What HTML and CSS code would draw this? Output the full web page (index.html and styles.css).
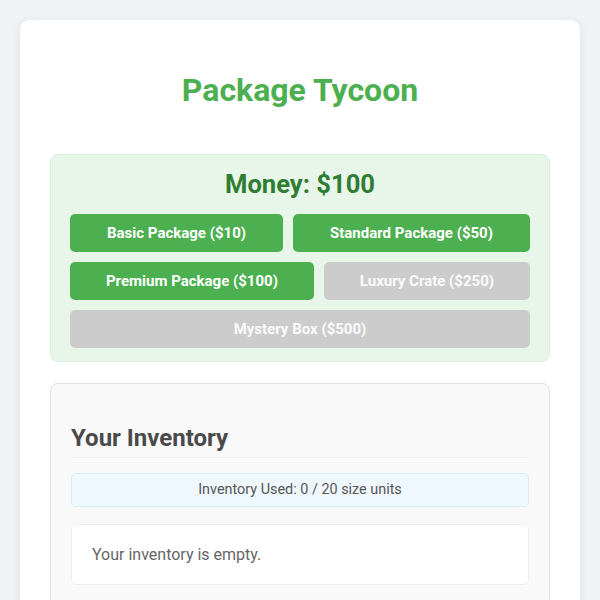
FILE: index.html
```html
<!DOCTYPE html>
<html>
<head>
<meta charset="utf-8">
<link rel="stylesheet" href="styles.css">
</head>
<body>
<div class="app">
  <h1 class="title">Package Tycoon</h1>
  <section class="shop">
    <h2 class="money">Money: $100</h2>
    <div class="buttons">
      <button class="btn">Basic Package ($10)</button>
      <button class="btn">Standard Package ($50)</button>
      <button class="btn">Premium Package ($100)</button>
      <button class="btn disabled">Luxury Crate ($250)</button>
      <button class="btn disabled">Mystery Box ($500)</button>
    </div>
  </section>
  <section class="inventory">
    <h2 class="inv-title">Your Inventory</h2>
    <div class="usage">Inventory Used: 0 / 20 size units</div>
    <div class="empty">Your inventory is empty.</div>
  </section>
</div>
</body>
</html>
```
FILE: styles.css
```css
html, body {
  margin: 0;
  padding: 0;
}
body {
  background: #f0f2f5;
  font-family: Roboto, "Liberation Sans", sans-serif;
  padding: 20px;
}
.app {
  background: #ffffff;
  border-radius: 10px;
  box-shadow: 0 2px 10px rgba(0, 0, 0, 0.08);
  padding: 30px 30px 40px;
  min-height: 700px;
}
.title {
  margin: 21px 0 45px;
  text-align: center;
  color: #4caf50;
  font-size: 32px;
  font-weight: 700;
  line-height: 38px;
}
.shop {
  background: #e8f5e9;
  border: 1px solid #dcefdd;
  border-radius: 8px;
  padding: 14px 19px 13px;
  margin-bottom: 21px;
}
.money {
  margin: 0 0 15px;
  text-align: center;
  color: #2e7d32;
  font-size: 25.6px;
  font-weight: 700;
  line-height: 30px;
}
.buttons {
  display: flex;
  flex-wrap: wrap;
  gap: 10px;
}
.btn {
  flex: 1 1 auto;
  border: none;
  border-radius: 5px;
  background: #4caf50;
  color: #ffffff;
  font-family: Roboto, "Liberation Sans", sans-serif;
  font-size: 15px;
  font-weight: 700;
  line-height: 18px;
  padding: 10px 20px;
}
.btn.disabled {
  background: #cccccc;
  color: #fafafa;
}
.inventory {
  background: #f9f9f9;
  border: 1px solid #e0e0e0;
  border-radius: 8px;
  padding: 20px;
}
.inv-title {
  margin: 20px 0 15px;
  padding-bottom: 5px;
  border-bottom: 1px solid #eeeeee;
  color: #4a4a4a;
  font-size: 24px;
  font-weight: 700;
  line-height: 28px;
}
.usage {
  background: #f0f8ff;
  border: 1px solid #d6eaf8;
  border-radius: 5px;
  padding: 8px;
  text-align: center;
  color: #555555;
  font-size: 14.4px;
  line-height: 16px;
  margin-bottom: 17px;
}
.empty {
  background: #ffffff;
  border: 1px solid #eeeeee;
  border-radius: 5px;
  padding: 20px;
  color: #666666;
  font-size: 16px;
  line-height: 19px;
}
```
